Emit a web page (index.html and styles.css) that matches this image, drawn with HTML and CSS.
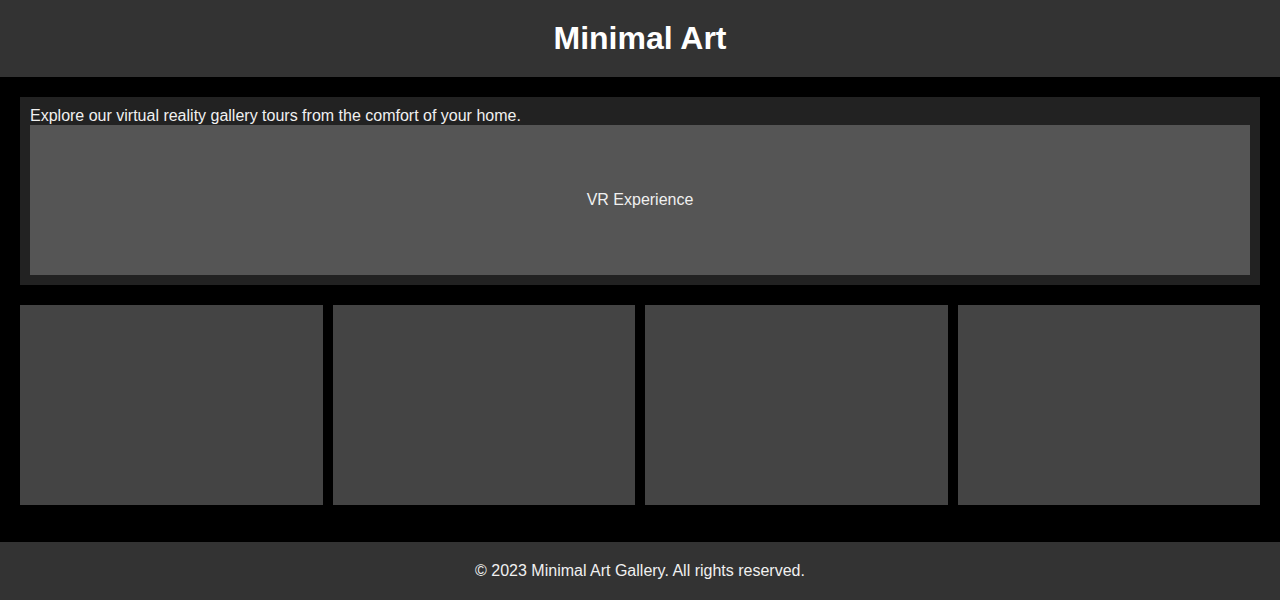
FILE: index.html
```html
<!DOCTYPE html>
<html lang="en">
<head>
<meta charset="utf-8">
<title>Minimal Art</title>
<link rel="stylesheet" href="styles.css">
</head>
<body>
<header class="site-header">
  <h1 class="site-title">Minimal Art</h1>
</header>
<main class="main">
  <section class="vr-section">
    <p class="vr-intro">Explore our virtual reality gallery tours from the comfort of your home.</p>
    <div class="vr-box">VR Experience</div>
  </section>
  <div class="gallery">
    <div class="art"></div>
    <div class="art"></div>
    <div class="art"></div>
    <div class="art"></div>
  </div>
</main>
<footer class="site-footer">
  <p class="footer-text">&copy; 2023 Minimal Art Gallery. All rights reserved.</p>
</footer>
</body>
</html>
```

FILE: styles.css
```css
html, body {
  margin: 0;
  padding: 0;
}
body {
  background: #000;
  color: #f0f0f0;
  font-family: "Liberation Sans", Arial, sans-serif;
  font-size: 16px;
  line-height: 18px;
}
.site-header {
  background: #333;
  padding: 20px;
  text-align: center;
}
.site-title {
  margin: 0;
  font-size: 32px;
  line-height: 37px;
  font-weight: bold;
  color: #fff;
}
.main {
  padding: 20px 20px 37px;
  display: flex;
  flex-direction: column;
  gap: 20px;
}
.vr-section {
  background: #222;
  padding: 10px;
}
.vr-intro {
  margin: 0;
}
.vr-box {
  height: 150px;
  background: #555;
  display: flex;
  align-items: center;
  justify-content: center;
}
.gallery {
  display: grid;
  grid-template-columns: repeat(4, 1fr);
  gap: 10px;
}
.art {
  height: 200px;
  background: #444;
}
.site-footer {
  background: #333;
  padding: 20px;
  text-align: center;
}
.footer-text {
  margin: 0;
}
```
